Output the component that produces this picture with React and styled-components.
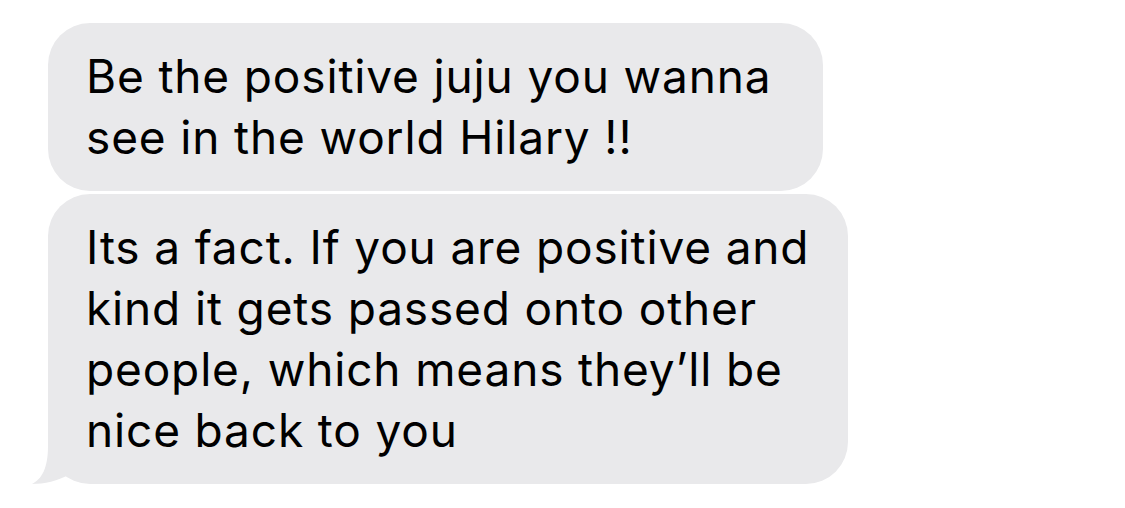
import React from "react";
import styled, { createGlobalStyle } from "styled-components";

const GlobalStyle = createGlobalStyle`
  body {
    margin: 0;
    background: #ffffff;
  }
`;

const Thread = styled.div`
  display: flex;
  flex-direction: column;
  align-items: flex-start;
  gap: 3px;
  padding: 23px 0 0 48px;
  width: 1125px;
  height: 508px;
  box-sizing: border-box;
  background: #ffffff;
`;

const Bubble = styled.div`
  position: relative;
  width: ${(p) => p.width}px;
  box-sizing: border-box;
  padding: 23px 38px;
  background: #e9e9eb;
  border-radius: 42px;
  color: #000000;
  font-family: Inter, "Liberation Sans", sans-serif;
  font-size: 46px;
  line-height: 61px;
  letter-spacing: 0.85px;
`;

const Line = styled.div`
  position: relative;
  z-index: 1;
  white-space: nowrap;
`;

const Tail = styled.svg`
  position: absolute;
  left: -16px;
  bottom: 0;
`;

function Message({ lines, width, tail }) {
  return (
    <Bubble width={width}>
      {lines.map((line, i) => (
        <Line key={i}>{line}</Line>
      ))}
      {tail && (
        <Tail width="60" height="50" viewBox="0 0 60 50">
          <path
            d="M16 8 L16 12 C16 34 10 45 0 50 C12 50 26 47 38 40 L38 8 Z"
            fill="#e9e9eb"
          />
        </Tail>
      )}
    </Bubble>
  );
}

export default function App() {
  return (
    <>
      <GlobalStyle />
      <Thread>
        <Message
          width={775}
          lines={["Be the positive juju you wanna", "see in the world Hilary !!"]}
        />
        <Message
          width={800}
          tail
          lines={[
            "Its a fact. If you are positive and",
            "kind it gets passed onto other",
            "people, which means they\u2019ll be",
            "nice back to you",
          ]}
        />
      </Thread>
    </>
  );
}
